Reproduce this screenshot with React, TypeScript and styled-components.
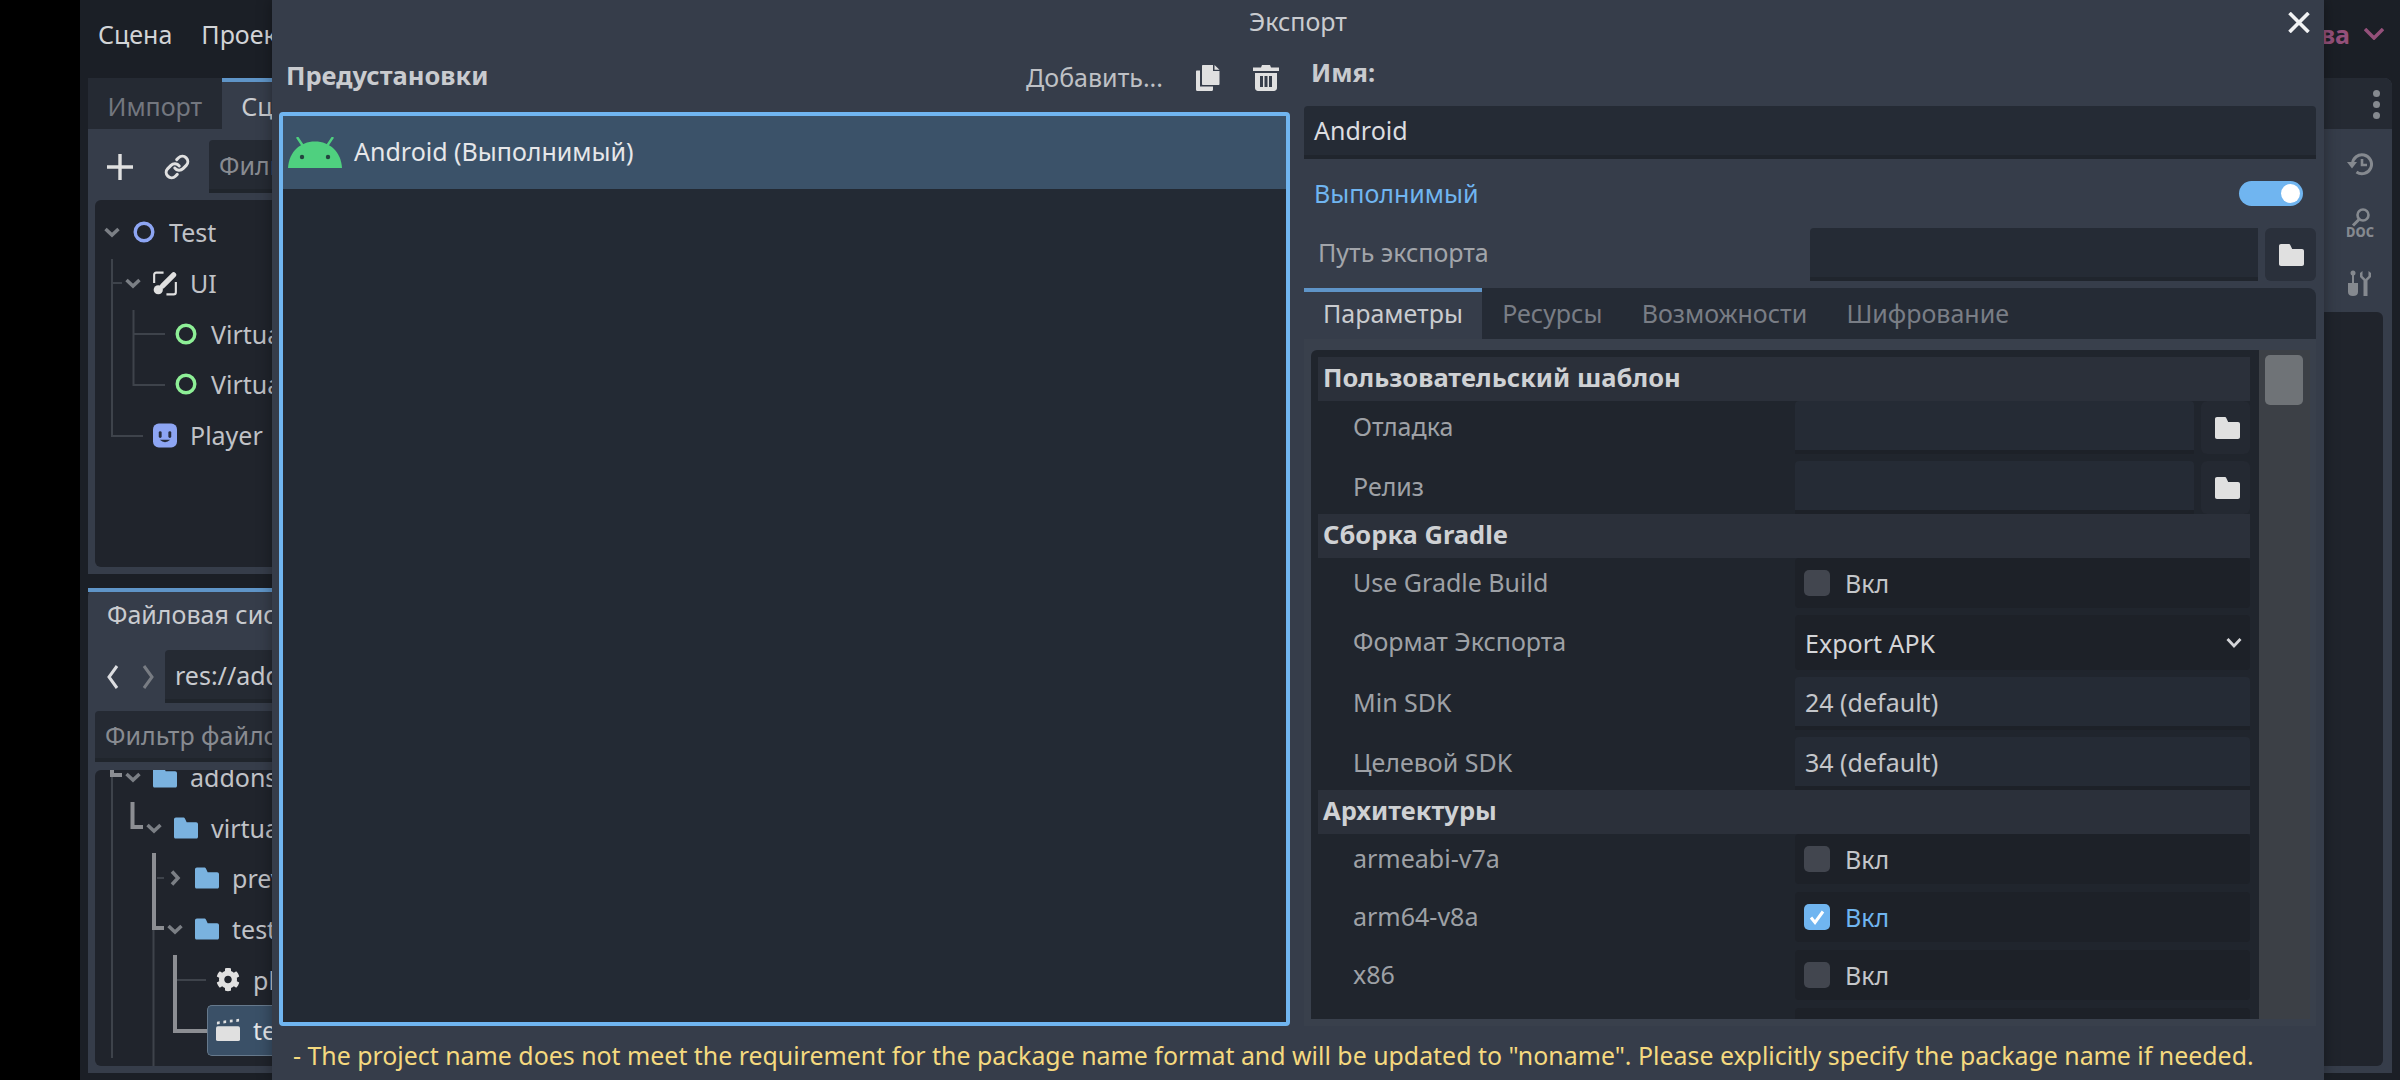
import React from "react";
import styled, { createGlobalStyle } from "styled-components";
import { FaCog } from "react-icons/fa";
import { Link as LinkIcon } from "lucide-react";

const GlobalStyle = createGlobalStyle`
  html, body {
    margin: 0;
    padding: 0;
    background: #000;
  }
  body {
    font-family: "Noto Sans", "Liberation Sans", sans-serif;
    font-size: 25px;
    color: #c4c6ca;
  }
  * {
    box-sizing: border-box;
  }
`;

const Folder = ({ color = "#e0e0e0", size = 25 }: { color?: string; size?: number }) => (
  <svg width={size} height={size * 0.88} viewBox="0 0 25 22">
    <path
      fill={color}
      d="M2 0h7.5c1 0 1.6.5 2 1.4L13.2 5H23c1.2 0 2 .9 2 2v13c0 1.2-.9 2-2 2H2c-1.200 0-2-.8-2-2V2C0 .9.800 0 2 0z"
    />
  </svg>
);

const Ring = ({ color }: { color: string }) => (
  <svg width="24" height="24" viewBox="0 0 24 24">
    <circle cx="12" cy="12" r="8.800" fill="none" stroke={color} strokeWidth="3.400" />
  </svg>
);

const Arrow = ({ open = true }: { open?: boolean }) => (
  <svg width="20" height="20" viewBox="0 0 20 20">
    <polyline
      points={open ? "3.500,7 10,13 16.500,7" : "7,3.500 13,10 7,16.500"}
      fill="none"
      stroke="#7b7f85"
      strokeWidth="3.500"
    />
  </svg>
);

const AndroidHead = () => (
  <svg width="54" height="31" viewBox="0 0 54 31">
    <path d="M27 4.500C12 4.500 1 15 0 31h54C53 15 42 4.500 27 4.500z" fill="#4fd07f" />
    <path d="M9 0l6 9M45 0l-6 9" stroke="#4fd07f" strokeWidth="2.400" />
    <circle cx="14" cy="20" r="2.200" fill="#24453f" />
    <circle cx="40" cy="20" r="2.200" fill="#24453f" />
  </svg>
);

const CopyGlyph = () => (
  <svg width="24" height="26" viewBox="0 0 24 26">
    <path
      fill="#e0e0e0"
      d="M7 0h9l1 0v6h6.500v13c0 .6-.4 1-1 1H7c-.6 0-1-.4-1-1V1c0-.6.400-1 1-1zM18.500 0l5 4.800h-5zM0 6.500c0-.6.400-1 1-1h3v16h13v3c0 .6-.4 1.500-1 1.500H1c-.6 0-1-.9-1-1.500z"
    />
  </svg>
);

const TrashGlyph = () => (
  <svg width="26" height="26" viewBox="0 0 26 26">
    <path
      fill="#e0e0e0"
      d="M9 0h8l1 2.500h8v3.500H0V2.500h8zM2 8h22v15c0 1.600-1.400 3-3 3H5c-1.600 0-3-1.400-3-3zM7 11v11h3V11zm4.500 0v11h3V11zm4.500 0v11h3V11z"
      fillRule="evenodd"
    />
  </svg>
);

const ControlGlyph = () => (
  <svg width="25" height="25" viewBox="0 0 25 25">
    <path
      d="M11 1.200H3.500Q1.200 1.200 1.200 3.500V12M14 23.800H21.500Q23.800 23.800 23.800 21.500V11"
      fill="none"
      stroke="#e0e0e0"
      strokeWidth="2.200"
    />
    <path d="M21.500 3.500L10 15" stroke="#e0e0e0" strokeWidth="5.400" strokeLinecap="round" />
    <circle cx="5.500" cy="19" r="4.800" fill="#e0e0e0" />
  </svg>
);

const PlayerGlyph = () => (
  <svg width="25" height="25" viewBox="0 0 25 25">
    <rect width="25" height="25" rx="6" fill="#8da5f3" />
    <rect x="6" y="8" width="3" height="7" rx="1.500" fill="#262c3b" />
    <rect x="16" y="8" width="3" height="7" rx="1.500" fill="#262c3b" />
    <path d="M7 17q5.500 5 11 0z" fill="#262c3b" />
  </svg>
);

const ClapperGlyph = () => (
  <svg width="26" height="24" viewBox="0 0 26 24">
    <rect x="0" y="8" width="26" height="16" rx="2" fill="#e0e0e0" />
    <path d="M1 3l3-.5v3l-3 .5zM8 2l3-.5v3l-3 .5zM15 1l3-.5v3l-3 .5zM22 .3l3-.5v3l-3 .5z" fill="#e0e0e0" />
  </svg>
);

const HistoryGlyph = () => (
  <svg width="26" height="24" viewBox="0 0 26 24">
    <path
      d="M5.500 12a9.500 9.500 0 1 1 4 8"
      fill="none"
      stroke="#85898f"
      strokeWidth="3"
    />
    <path d="M0 10h10l-5 6.500z" fill="#85898f" />
    <path d="M15 7v6h5" fill="none" stroke="#85898f" strokeWidth="2.600" />
  </svg>
);

const DocGlyph = () => (
  <svg width="28" height="30" viewBox="0 0 28 30">
    <circle cx="17" cy="7" r="5.500" fill="none" stroke="#85898f" strokeWidth="2.600" />
    <path d="M13 11.500l-6 6" stroke="#85898f" strokeWidth="3" />
    <text
      x="0"
      y="29"
      textLength="28"
      lengthAdjust="spacingAndGlyphs"
      fontFamily="'Noto Sans', sans-serif"
      fontSize="14.500"
      fontWeight="800"
      fill="#85898f"
    >
      DOC
    </text>
  </svg>
);

const ToolsGlyph = () => (
  <svg width="24" height="26" viewBox="0 0 24 26">
    <circle cx="5" cy="3" r="2.500" fill="#85898f" />
    <path d="M5 3v10" stroke="#85898f" strokeWidth="2" />
    <path d="M0 13h10v9q0 4-5 4t-5-4z" fill="#85898f" />
    <path d="M14.500 1v5l3 3 3-3V1l2.500 2v4l-3.500 3.500V26h-4V10.500L12 7V3z" fill="#85898f" />
  </svg>
);

const Screen = styled.div`
  position: relative;
  display: flex;
  width: 2400px;
  height: 1080px;
  overflow: hidden;
  background: #000;
`;

const BlackBand = styled.div`
  width: 80px;
  flex: none;
  background: #000;
`;

const Editor = styled.div`
  flex: 1;
  display: flex;
  flex-direction: column;
  min-width: 0;
  background: #1b1f26;
`;

const MenuBar = styled.div`
  height: 78px;
  flex: none;
  display: flex;
  align-items: center;
  justify-content: space-between;
  padding: 0 16px 10px 18px;
`;

const MenuGroup = styled.div`
  display: flex;
  gap: 29px;
  color: #d2d4d7;
`;

const RendererLabel = styled.div`
  display: flex;
  align-items: center;
  gap: 14px;
  color: #94507a;
  font-weight: 700;
`;

const Docks = styled.div`
  flex: 1;
  min-height: 0;
  display: flex;
  justify-content: space-between;
  padding: 0 8px 7px;
`;

const LeftColumn = styled.div`
  width: 420px;
  display: flex;
  flex-direction: column;
  gap: 14px;
`;

const Dock = styled.div<{ $height?: number }>`
  ${(p) => (p.$height ? `height: ${p.$height}px;` : "flex: 1;")}
  min-height: 0;
  display: flex;
  flex-direction: column;
  background: #363d4a;
  border-radius: 8px 8px 0 0;
`;

const TabBar = styled.div`
  height: 51px;
  flex: none;
  display: flex;
  background: #252a33;
  border-radius: 8px 8px 0 0;
`;

const DockTab = styled.div<{ $active?: boolean }>`
  display: flex;
  align-items: center;
  padding: 0 19.500px;
  background: ${(p) => (p.$active ? "#363d4a" : "#252a33")};
  color: ${(p) => (p.$active ? "#c9cbcf" : "#73777f")};
  border-top: 4px solid ${(p) => (p.$active ? "#5f95c8" : "transparent")};
`;

const SceneBody = styled.div`
  flex: 1;
  min-height: 0;
  display: flex;
  flex-direction: column;
  gap: 7px;
  padding: 11px 7px 7px;
`;

const SceneToolbar = styled.div`
  height: 53px;
  flex: none;
  display: flex;
  align-items: center;
  gap: 7px;
`;

const ToolButton = styled.div`
  width: 50px;
  height: 50px;
  flex: none;
  display: flex;
  align-items: center;
  justify-content: center;
  color: #e0e0e0;
`;

const DockInput = styled.div<{ $height?: number; $muted?: boolean }>`
  flex: 1;
  height: ${(p) => p.$height ?? 53}px;
  display: flex;
  align-items: center;
  padding-left: 10px;
  background: #252a33;
  border-bottom: 4px solid #20252c;
  border-radius: 4px 4px 0 0;
  color: ${(p) => (p.$muted ? "#888b91" : "#c9cbcf")};
  white-space: nowrap;
  overflow: hidden;
`;

const TreePanel = styled.div`
  position: relative;
  flex: 1;
  min-height: 0;
  overflow: hidden;
  background: #20242c;
  border-radius: 6px;
`;

const TreeGuides = styled.svg`
  position: absolute;
  left: 0;
  top: 0;
  pointer-events: none;
`;

const SceneRows = styled.div`
  padding-top: 7px;
`;

const FileRows = styled.div`
  margin-top: -18.300px;
`;

const TreeRow = styled.div<{ $level: number; $selected?: boolean }>`
  height: 50.700px;
  display: flex;
  align-items: center;
  color: #c0c2c7;
  white-space: nowrap;
  padding-left: ${(p) => (p.$selected ? 8 : 7 + p.$level * 21)}px;
  ${(p) =>
    p.$selected &&
    `
    margin-left: 112px;
    background: #3a5067;
    border: 1px solid #66798c;
    border-right: none;
    border-radius: 5px 0 0 5px;
    color: #e4e5e7;
  `}
`;

const ArrowSlot = styled.span`
  width: 20px;
  height: 20px;
  flex: none;
  display: flex;
  margin-right: 10px;
`;

const TreeIcon = styled.span`
  width: 24px;
  flex: none;
  display: flex;
  align-items: center;
  justify-content: center;
  margin-right: 13px;
`;

const FileTab = styled.div`
  height: 52px;
  flex: none;
  display: flex;
  align-items: center;
  padding: 0 0 5px 19px;
  border-top: 4px solid #5f95c8;
  color: #c9cbcf;
`;

const FileBody = styled.div`
  flex: 1;
  min-height: 0;
  display: flex;
  flex-direction: column;
  gap: 8px;
  padding: 10px 7px 7px;
`;

const NavRow = styled.div`
  height: 53px;
  flex: none;
  display: flex;
  align-items: center;
`;

const NavButton = styled.div`
  width: 35px;
  flex: none;
  display: flex;
  justify-content: center;
`;

const FilterRow = styled.div`
  height: 51px;
  flex: none;
  display: flex;
`;

const RightDock = styled(Dock)`
  width: 500px;
  flex: none;
`;

const RightTabBar = styled(TabBar)`
  justify-content: flex-end;
  align-items: center;
  padding-right: 12px;
`;

const MoreDots = styled.div`
  display: flex;
  flex-direction: column;
  gap: 4px;
  margin-top: 2px;

  span {
    display: block;
    width: 7px;
    height: 7px;
    border-radius: 50%;
    background: #85898f;
  }
`;

const RightBody = styled.div`
  flex: 1;
  min-height: 0;
  display: flex;
  flex-direction: column;
  align-items: flex-end;
  padding: 23px 9px 7px 0;
`;

const RightIcons = styled.div`
  width: 46px;
  display: flex;
  flex-direction: column;
  align-items: center;
  gap: 32px;
  margin-bottom: 16px;
`;

const RightTree = styled.div`
  flex: 1;
  width: 200px;
  background: #20242c;
  border-radius: 6px;
`;

const Dialog = styled.div`
  position: absolute;
  left: 272px;
  top: 0;
  width: 2052px;
  height: 1080px;
  display: flex;
  flex-direction: column;
  background: #363d4a;
  box-shadow: 0 0 14px rgba(0, 0, 0, 0.35);
`;

const TitleBar = styled.div`
  position: relative;
  height: 44px;
  flex: none;
  display: flex;
  align-items: center;
  justify-content: center;
  padding-bottom: 2px;
  color: #c9cbcf;
`;

const CloseButton = styled.svg`
  position: absolute;
  right: 14px;
  top: 12px;
`;

const DialogBody = styled.div`
  height: 982px;
  flex: none;
  display: grid;
  grid-template-columns: 1011px 1012px;
  column-gap: 14px;
  padding: 0 8px 0 7px;
`;

const PresetColumn = styled.div`
  display: flex;
  flex-direction: column;
  min-height: 0;
`;

const PresetHeader = styled.div`
  height: 68px;
  flex: none;
  display: flex;
  align-items: center;
  padding: 0 11px 6px 7px;
`;

const BoldLabel = styled.div`
  font-size: 25.500px;
  font-weight: 700;
  color: #c9cbcf;
`;

const AddLabel = styled.div`
  margin-left: auto;
  margin-right: 33px;
  margin-top: 4px;
  color: #bfc1c5;
`;

const HeaderIcons = styled.div`
  display: flex;
  align-items: center;
  gap: 33px;
  margin-top: 6px;
`;

const PresetList = styled.div`
  flex: 1;
  background: #232a34;
  border: 4px solid #70b5f0;
  border-radius: 4px;
`;

const PresetRow = styled.div`
  height: 73px;
  display: flex;
  align-items: center;
  gap: 12px;
  padding: 0 0 0 5px;
  background: #3b5269;
  color: #e6e7e9;

  span {
    margin-top: -3px;
  }
`;

const OptionsColumn = styled.div`
  display: flex;
  flex-direction: column;
  min-height: 0;
`;

const NameLabel = styled(BoldLabel)`
  height: 62px;
  flex: none;
  display: flex;
  align-items: center;
  padding: 0 0 6px 7px;
`;

const NameInput = styled.div`
  height: 53px;
  flex: none;
  display: flex;
  align-items: center;
  padding: 0 0 2px 10px;
  background: #252b35;
  border-bottom: 4px solid #20252d;
  border-radius: 4px 4px 0 0;
  color: #dcdde0;
`;

const RunnableRow = styled.div`
  height: 69px;
  flex: none;
  display: flex;
  align-items: center;
  justify-content: space-between;
  padding: 0 13px 0 10px;
  color: #70b5f0;

  span {
    margin-top: -1.500px;
  }
`;

const SwitchTrack = styled.div`
  width: 64px;
  height: 25px;
  display: flex;
  align-items: center;
  justify-content: flex-end;
  padding-right: 2px;
  background: #70b5f0;
  border-radius: 13px;
`;

const SwitchKnob = styled.div`
  width: 19px;
  height: 19px;
  margin-right: 1px;
  border-radius: 50%;
  background: #fff;
`;

const ExportPathRow = styled.div`
  height: 53px;
  flex: none;
  display: flex;
  align-items: center;
  padding-left: 14px;
  color: #a2a5aa;
`;

const ExportPathLabel = styled.div`
  width: 492px;
  flex: none;
  margin-top: -5px;
`;

const PathField = styled.div`
  flex: 1;
  height: 53px;
  background: #252b35;
  border-bottom: 4px solid #20252d;
  border-radius: 4px 0 0 0;
`;

const PathButton = styled.div<{ $width: number }>`
  width: ${(p) => p.$width}px;
  height: 53px;
  flex: none;
  display: flex;
  align-items: center;
  justify-content: center;
  margin-left: 7px;
  padding-left: 2px;
  background: #2a303b;
  border-radius: 6px;
`;

const OptionTabs = styled.div`
  margin-top: 7px;
  height: 51px;
  flex: none;
  display: flex;
  background: #252b35;
  border-radius: 0 8px 0 0;
`;

const OptionTab = styled.div<{ $active?: boolean }>`
  display: flex;
  align-items: center;
  padding: 0 19px 5px;
  margin-left: ${(p) => (p.$active ? 0 : 1.300)}px;
  background: ${(p) => (p.$active ? "#363d4a" : "transparent")};
  color: ${(p) => (p.$active ? "#c9cbcf" : "#797d85")};
  border-top: 4px solid ${(p) => (p.$active ? "#5f95c8" : "transparent")};
`;

const OptionPanel = styled.div`
  flex: 1;
  min-height: 0;
  display: flex;
  padding: 11px 6px 7px 7px;
  background: #39404c;
`;

const PropertyList = styled.div`
  flex: 1;
  min-width: 0;
  overflow: hidden;
  padding: 7px 9px 0 7px;
  background: #20252d;
  border-radius: 6px 0 0 0;
`;

const ScrollTrack = styled.div`
  width: 51px;
  flex: none;
  padding: 5px 7px 0 6px;
  background: #3c4046;
`;

const ScrollGrabber = styled.div`
  height: 50px;
  border-radius: 5px;
  background: #6f7377;
`;

const Section = styled.div`
  height: 44px;
  display: flex;
  align-items: center;
  padding: 0 0 5px 5px;
  background: #2b303a;
  font-size: 25.500px;
  font-weight: 700;
  color: #cfd1d4;
`;

const PropertyRow = styled.div<{ $height: number; $after?: number }>`
  height: ${(p) => p.$height}px;
  margin-bottom: ${(p) => p.$after ?? 0}px;
  display: grid;
  grid-template-columns: 477px 1fr;
  color: #9ea1a6;
`;

const PropertyLabel = styled.div<{ $lift?: number }>`
  display: flex;
  align-items: center;
  padding: 0 0 ${(p) => p.$lift ?? 4}px 35px;
`;

const FieldRow = styled.div`
  display: flex;
  min-width: 0;
`;

const TextField = styled.div`
  flex: 1;
  display: flex;
  align-items: center;
  padding-left: 10px;
  background: #252b35;
  border-bottom: 4px solid #1d2128;
  border-radius: 4px 4px 0 0;
  color: #c4c6ca;
`;

const DarkField = styled.div`
  flex: 1;
  display: flex;
  align-items: center;
  padding: 0 8px 0 10px;
  background: #1d2128;
  border-radius: 4px;
  color: #d4d5d8;
`;

const CheckBox = styled.div<{ $on?: boolean }>`
  width: 26px;
  height: 26px;
  flex: none;
  display: flex;
  align-items: center;
  justify-content: center;
  margin-left: -1px;
  background: ${(p) => (p.$on ? "#70b5f0" : "#42464f")};
  border-radius: 5px;
`;

const CheckText = styled.span<{ $on?: boolean }>`
  margin-left: 15px;
  color: ${(p) => (p.$on ? "#70b5f0" : "#c4c6ca")};
`;

const SelectChevron = styled.span`
  margin-left: auto;
  display: flex;
`;

const SideButton = styled.div`
  width: 49px;
  flex: none;
  display: flex;
  align-items: center;
  justify-content: center;
  margin-left: 7px;
  padding-left: 3px;
  background: #242932;
  border-radius: 6px;
`;

const MessageBar = styled.div`
  flex: 1;
  display: flex;
  align-items: center;
  padding: 3px 0 0 21px;
  font-size: 24.900px;
  color: #f5d97f;
  white-space: nowrap;
`;

const CheckRow = ({ label, on, after = 8 }: { label: string; on?: boolean; after?: number }) => (
  <PropertyRow $height={50} $after={after}>
    <PropertyLabel $lift={2}>{label}</PropertyLabel>
    <FieldRow>
      <DarkField>
        <CheckBox $on={on}>
          {on && (
            <svg width="18" height="18" viewBox="0 0 18 18">
              <path d="M3 9.500l4 5 8-11" fill="none" stroke="#fff" strokeWidth="3" />
            </svg>
          )}
        </CheckBox>
        <CheckText $on={on}>Вкл</CheckText>
      </DarkField>
    </FieldRow>
  </PropertyRow>
);

const FileRow = ({ label, after = 7 }: { label: string; after?: number }) => (
  <PropertyRow $height={53} $after={after}>
    <PropertyLabel>{label}</PropertyLabel>
    <FieldRow>
      <TextField />
      <SideButton>
        <Folder />
      </SideButton>
    </FieldRow>
  </PropertyRow>
);

const NumberRow = ({ label, value, after = 7 }: { label: string; value: string; after?: number }) => (
  <PropertyRow $height={53} $after={after}>
    <PropertyLabel>{label}</PropertyLabel>
    <FieldRow>
      <TextField>{value}</TextField>
    </FieldRow>
  </PropertyRow>
);

const App = () => {
  return (
    <Screen>
      <GlobalStyle />
      <BlackBand />
      <Editor>
        <MenuBar>
          <MenuGroup>
            <span>Сцена</span>
            <span>Проект</span>
          </MenuGroup>
          <RendererLabel>
            <span>Мобильные устройства</span>
            <svg width="20" height="12" viewBox="0 0 20 12">
              <polyline points="1,1 10,10 19,1" fill="none" stroke="#94507a" strokeWidth="3.500" />
            </svg>
          </RendererLabel>
        </MenuBar>
        <Docks>
          <LeftColumn>
            <Dock $height={496}>
              <TabBar>
                <DockTab>Импорт</DockTab>
                <DockTab $active>Сцена</DockTab>
              </TabBar>
              <SceneBody>
                <SceneToolbar>
                  <ToolButton>
                    <svg width="28" height="28" viewBox="0 0 28 28">
                      <path d="M14 1v26M1 14h26" stroke="#e0e0e0" strokeWidth="3.400" />
                    </svg>
                  </ToolButton>
                  <ToolButton>
                    <LinkIcon size={26} strokeWidth={2.800} />
                  </ToolButton>
                  <DockInput $muted>Фильтр</DockInput>
                </SceneToolbar>
                <TreePanel>
                  <TreeGuides width="320" height="370">
                    <g transform="translate(-95 -200)" fill="none" stroke="#3e434b" strokeWidth="2">
                      <path d="M112 259V436H143M112 283H122M133.500 310V385H165M133.500 334H165" />
                    </g>
                  </TreeGuides>
                  <SceneRows>
                    <TreeRow $level={0}>
                      <ArrowSlot><Arrow /></ArrowSlot>
                      <TreeIcon><Ring color="#8da5f3" /></TreeIcon>
                      Test
                    </TreeRow>
                    <TreeRow $level={1}>
                      <ArrowSlot><Arrow /></ArrowSlot>
                      <TreeIcon><ControlGlyph /></TreeIcon>
                      UI
                    </TreeRow>
                    <TreeRow $level={2}>
                      <ArrowSlot />
                      <TreeIcon><Ring color="#8eef97" /></TreeIcon>
                      Virtual
                    </TreeRow>
                    <TreeRow $level={2}>
                      <ArrowSlot />
                      <TreeIcon><Ring color="#8eef97" /></TreeIcon>
                      Virtual
                    </TreeRow>
                    <TreeRow $level={1}>
                      <ArrowSlot />
                      <TreeIcon><PlayerGlyph /></TreeIcon>
                      Player
                    </TreeRow>
                  </SceneRows>
                </TreePanel>
              </SceneBody>
            </Dock>
            <Dock>
              <FileTab>Файловая система</FileTab>
              <FileBody>
                <NavRow>
                  <NavButton>
                    <svg width="14" height="26" viewBox="0 0 14 26">
                      <polyline points="11,2 3,13 11,24" fill="none" stroke="#dcdde0" strokeWidth="3" />
                    </svg>
                  </NavButton>
                  <NavButton>
                    <svg width="14" height="26" viewBox="0 0 14 26">
                      <polyline points="3,2 11,13 3,24" fill="none" stroke="#787c83" strokeWidth="3" />
                    </svg>
                  </NavButton>
                  <DockInput>res://addons</DockInput>
                </NavRow>
                <FilterRow>
                  <DockInput $height={51} $muted>Фильтр файлов</DockInput>
                </FilterRow>
                <TreePanel>
                  <TreeGuides width="320" height="300">
                    <g transform="translate(-95 -770)" fill="none">
                      <path
                        d="M112 770V1058M153.500 930V1066M157 878H164M177 980H206"
                        stroke="#3e434b"
                        strokeWidth="2"
                      />
                      <path
                        d="M112 770V775H122M132.500 802V827H143M154 853V928H164M175 955V1031H207"
                        stroke="#8c8e93"
                        strokeWidth="4"
                      />
                    </g>
                  </TreeGuides>
                  <FileRows>
                    <TreeRow $level={1}>
                      <ArrowSlot><Arrow /></ArrowSlot>
                      <TreeIcon><Folder color="#7ab2df" /></TreeIcon>
                      addons
                    </TreeRow>
                    <TreeRow $level={2}>
                      <ArrowSlot><Arrow /></ArrowSlot>
                      <TreeIcon><Folder color="#7ab2df" /></TreeIcon>
                      virtual
                    </TreeRow>
                    <TreeRow $level={3}>
                      <ArrowSlot><Arrow open={false} /></ArrowSlot>
                      <TreeIcon><Folder color="#7ab2df" /></TreeIcon>
                      previews
                    </TreeRow>
                    <TreeRow $level={3}>
                      <ArrowSlot><Arrow /></ArrowSlot>
                      <TreeIcon><Folder color="#7ab2df" /></TreeIcon>
                      test
                    </TreeRow>
                    <TreeRow $level={4}>
                      <ArrowSlot />
                      <TreeIcon><FaCog size={25} color="#e0e0e0" /></TreeIcon>
                      plugin
                    </TreeRow>
                    <TreeRow $level={4} $selected>
                      <TreeIcon><ClapperGlyph /></TreeIcon>
                      test
                    </TreeRow>
                  </FileRows>
                </TreePanel>
              </FileBody>
            </Dock>
          </LeftColumn>
          <RightDock>
            <RightTabBar>
              <MoreDots>
                <span />
                <span />
                <span />
              </MoreDots>
            </RightTabBar>
            <RightBody>
              <RightIcons>
                <HistoryGlyph />
                <DocGlyph />
                <ToolsGlyph />
              </RightIcons>
              <RightTree />
            </RightBody>
          </RightDock>
        </Docks>
      </Editor>

      <Dialog>
        <TitleBar>
          Экспорт
          <CloseButton width="22" height="21" viewBox="0 0 22 21">
            <path d="M1.500 1L20.500 20M20.500 1L1.500 20" stroke="#f2f3f4" strokeWidth="3.600" />
          </CloseButton>
        </TitleBar>
        <DialogBody>
          <PresetColumn>
            <PresetHeader>
              <BoldLabel>Предустановки</BoldLabel>
              <AddLabel>Добавить...</AddLabel>
              <HeaderIcons>
                <CopyGlyph />
                <TrashGlyph />
              </HeaderIcons>
            </PresetHeader>
            <PresetList>
              <PresetRow>
                <AndroidHead />
                <span>Android (Выполнимый)</span>
              </PresetRow>
            </PresetList>
          </PresetColumn>
          <OptionsColumn>
            <NameLabel>Имя:</NameLabel>
            <NameInput>Android</NameInput>
            <RunnableRow>
              <span>Выполнимый</span>
              <SwitchTrack>
                <SwitchKnob />
              </SwitchTrack>
            </RunnableRow>
            <ExportPathRow>
              <ExportPathLabel>Путь экспорта</ExportPathLabel>
              <PathField />
              <PathButton $width={51}>
                <Folder />
              </PathButton>
            </ExportPathRow>
            <OptionTabs>
              <OptionTab $active>Параметры</OptionTab>
              <OptionTab>Ресурсы</OptionTab>
              <OptionTab>Возможности</OptionTab>
              <OptionTab>Шифрование</OptionTab>
            </OptionTabs>
            <OptionPanel>
              <PropertyList>
                <Section>Пользовательский шаблон</Section>
                <FileRow label="Отладка" />
                <FileRow label="Релиз" after={0} />
                <Section>Сборка Gradle</Section>
                <CheckRow label="Use Gradle Build" after={7} />
                <PropertyRow $height={55} $after={7}>
                  <PropertyLabel>Формат Экспорта</PropertyLabel>
                  <FieldRow>
                    <DarkField>
                      Export APK
                      <SelectChevron>
                        <svg width="16" height="12" viewBox="0 0 16 12">
                          <polyline points="1.500,2 8,9 14.500,2" fill="none" stroke="#d4d5d8" strokeWidth="2.800" />
                        </svg>
                      </SelectChevron>
                    </DarkField>
                  </FieldRow>
                </PropertyRow>
                <NumberRow label="Min SDK" value="24 (default)" />
                <NumberRow label="Целевой SDK" value="34 (default)" after={0} />
                <Section>Архитектуры</Section>
                <CheckRow label="armeabi-v7a" />
                <CheckRow label="arm64-v8a" on />
                <CheckRow label="x86" />
                <CheckRow label="x86_64" />
              </PropertyList>
              <ScrollTrack>
                <ScrollGrabber />
              </ScrollTrack>
            </OptionPanel>
          </OptionsColumn>
        </DialogBody>
        <MessageBar>
          - The project name does not meet the requirement for the package name format and will be updated to "noname". Please explicitly specify the package name if needed.
        </MessageBar>
      </Dialog>
    </Screen>
  );
};

export default App;
